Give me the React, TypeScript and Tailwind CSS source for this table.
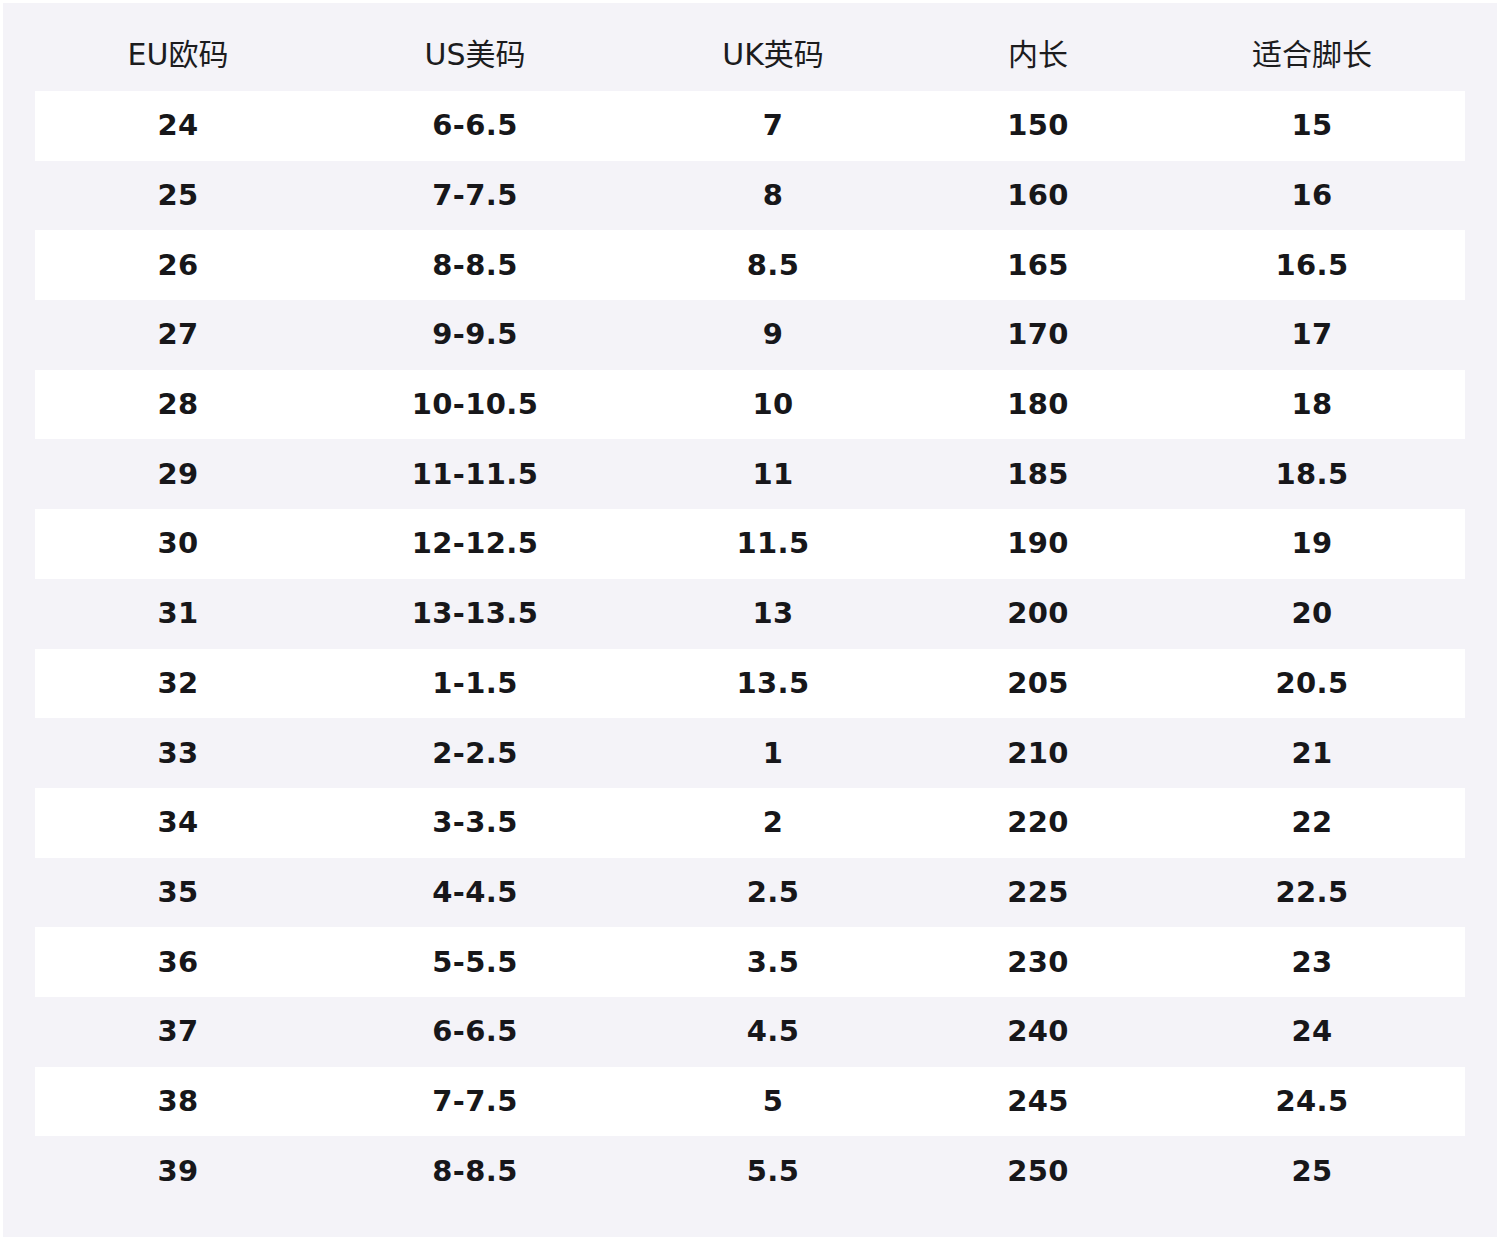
import React from "react";

const rows: string[][] = [
  ["24", "6-6.5", "7", "150", "15"],
  ["25", "7-7.5", "8", "160", "16"],
  ["26", "8-8.5", "8.5", "165", "16.5"],
  ["27", "9-9.5", "9", "170", "17"],
  ["28", "10-10.5", "10", "180", "18"],
  ["29", "11-11.5", "11", "185", "18.5"],
  ["30", "12-12.5", "11.5", "190", "19"],
  ["31", "13-13.5", "13", "200", "20"],
  ["32", "1-1.5", "13.5", "205", "20.5"],
  ["33", "2-2.5", "1", "210", "21"],
  ["34", "3-3.5", "2", "220", "22"],
  ["35", "4-4.5", "2.5", "225", "22.5"],
  ["36", "5-5.5", "3.5", "230", "23"],
  ["37", "6-6.5", "4.5", "240", "24"],
  ["38", "7-7.5", "5", "245", "24.5"],
  ["39", "8-8.5", "5.5", "250", "25"],
];

const headers = ["EU欧码", "US美码", "UK英码", "内长", "适合脚长"];

const grid = "grid grid-cols-[286px_308px_288px_242px_306px]";

export default function App() {
  return (
    <div className="w-[1500px] h-[1242px] bg-white p-[3px]">
      <div
        className="w-[1494px] h-[1234px] bg-[#f4f3f8] px-[32px] pt-[17px]"
        style={{ fontFamily: '"DejaVu Sans", "Noto Sans CJK SC", sans-serif' }}
      >
        <div className={`${grid} h-[71px] items-center text-[30px] text-[#1c1c1e]`}>
          {headers.map((h) => (
            <div key={h} className="text-center leading-none pb-[1px]">
              {h}
            </div>
          ))}
        </div>
        {rows.map((r, i) => (
          <div
            key={i}
            className={`${grid} h-[69.7px] items-center text-[29px] font-bold text-[#17171a] tracking-[0.4px] ${
              i % 2 === 0 ? "bg-white" : ""
            }`}
          >
            {r.map((c, j) => (
              <div key={j} className="text-center leading-none">
                {c}
              </div>
            ))}
          </div>
        ))}
      </div>
    </div>
  );
}
